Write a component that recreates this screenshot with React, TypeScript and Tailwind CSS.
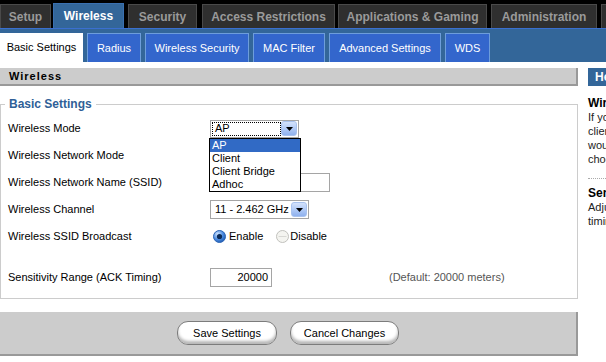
import React from "react"

const TOP_TABS = [
  { label: "Setup", w: "w-[51px]", ml: "ml-0" },
  { label: "Wireless", w: "w-[71px]", ml: "ml-[2px]", active: true },
  { label: "Security", w: "w-[69px]", ml: "ml-[4px]" },
  { label: "Access Restrictions", w: "w-[133px]", ml: "ml-[5px]" },
  { label: "Applications & Gaming", w: "w-[149px]", ml: "ml-[3px]" },
  { label: "Administration", w: "w-[106px]", ml: "ml-[4px]" },
  { label: "Status", w: "w-[60px]", ml: "ml-[4px]" },
]

const SUB_TABS = [
  { label: "Basic Settings", w: "w-[83px]", ml: "ml-0", active: true },
  { label: "Radius", w: "w-[54px]", ml: "ml-[4px]" },
  { label: "Wireless Security", w: "w-[104px]", ml: "ml-[4px]" },
  { label: "MAC Filter", w: "w-[72px]", ml: "ml-[4px]" },
  { label: "Advanced Settings", w: "w-[112px]", ml: "ml-[4px]" },
  { label: "WDS", w: "w-[45px]", ml: "ml-[4px]" },
]

const MODES = ["AP", "Client", "Client Bridge", "Adhoc"]

function DropButton() {
  return (
    <span className="flex h-[15px] w-[16px] items-center justify-center rounded-[3px] border border-[#a8c2ee] bg-gradient-to-b from-[#d4e2fb] via-[#b2cbf6] to-[#8fb1ee]">
      <svg width="7" height="4" viewBox="0 0 7 4">
        <path d="M0 0h7L3.5 4z" fill="#000" />
      </svg>
    </span>
  )
}

function Radio(props: { checked?: boolean }) {
  if (props.checked) {
    return (
      <svg width="13" height="13" viewBox="0 0 13 13">
        <defs>
          <radialGradient id="rg" cx="0.35" cy="0.3" r="0.8">
            <stop offset="0" stopColor="#cfe4ff" />
            <stop offset="0.55" stopColor="#4a8ae0" />
            <stop offset="1" stopColor="#1a55aa" />
          </radialGradient>
        </defs>
        <circle cx="6.5" cy="6.5" r="6" fill="url(#rg)" stroke="#2c64b4" />
        <circle cx="6.5" cy="6.5" r="2.6" fill="#0b2a55" />
      </svg>
    )
  }
  return (
    <svg width="13" height="13" viewBox="0 0 13 13">
      <circle cx="6.5" cy="6.5" r="6" fill="#f4f4f0" stroke="#c0c0bc" />
      <path d="M2.5 6.5h8" stroke="#d8d8d4" />
    </svg>
  )
}

function Row(props: { label: string; children?: React.ReactNode; className?: string }) {
  return (
    <div className={"flex h-[27px] items-center " + (props.className || "")}>
      <span className="w-[209px] shrink-0 pl-[7px]">{props.label}</span>
      <div className="relative flex flex-1 items-center">{props.children}</div>
    </div>
  )
}

export default function App() {
  return (
    <div className="h-[362px] w-[606px] overflow-hidden bg-white text-[11px] text-black [font-family:'Liberation_Sans',Arial,sans-serif]">
      {/* top tabs */}
      <div className="flex h-[28px] items-end bg-black">
        {TOP_TABS.map(function (t) {
          const cls = t.active
            ? "h-[25px] border-t border-x border-[#3a70b0] bg-[#336699] text-white"
            : "h-[24px] border-t border-x border-[#4a4a4a] bg-[#2f2f2f] text-[#9a9a9a]"
          return (
            <div
              key={t.label}
              className={"flex shrink-0 items-center justify-center text-[12px] font-bold " + t.w + " " + t.ml + " " + cls}
            >
              {t.label}
            </div>
          )
        })}
      </div>

      {/* sub tabs */}
      <div className="flex h-[34px] items-end border-t border-[#3a6fd0] bg-[#336699]">
        {SUB_TABS.map(function (t) {
          const cls = t.active
            ? "bg-white text-black"
            : "border-t border-x border-[#6d9ddb] bg-[#3366cc] text-white"
          return (
            <div
              key={t.label}
              className={"flex h-[29px] shrink-0 items-center justify-center text-[11px] " + t.w + " " + t.ml + " " + cls}
            >
              {t.label}
            </div>
          )
        })}
      </div>

      <div className="flex gap-[10px] pt-[6px]">
        {/* main column */}
        <div className="w-[578px] shrink-0">
          <div className="flex h-[18px] items-center border-b-2 border-r-2 border-[#999] bg-[#cccccc] pl-[9px] text-[11px] font-bold tracking-[1px]">
            Wireless
          </div>

          <fieldset className="mt-[11px] border border-[#cccccc] pb-[7px] pt-[4px]">
            <legend className="ml-[4px] px-[4px] text-[12px] font-bold leading-[14px] text-[#2f5f97]">
              Basic Settings
            </legend>

            <Row label="Wireless Mode">
              <div className="relative">
                <div className="flex h-[18px] w-[89px] items-center border border-[#a5a5a5] bg-white p-[1px]">
                  <span className="flex h-full flex-1 items-center border border-dotted border-black pl-[2px]">AP</span>
                  <DropButton />
                </div>
                <div className="absolute left-[-1px] top-[18px] z-10 w-[92px] border border-black bg-white">
                  {MODES.map(function (m, i) {
                    return (
                      <div
                        key={m}
                        className={"flex h-[13px] items-center pl-[2px] " + (i === 0 ? "bg-[#316ac5] text-white" : "")}
                      >
                        {m}
                      </div>
                    )
                  })}
                </div>
              </div>
            </Row>

            <Row label="Wireless Network Mode">
              <div className="h-[18px] w-[80px] border border-[#a5a5a5] bg-white" />
            </Row>

            <Row label="Wireless Network Name (SSID)">
              <div className="h-[19px] w-[120px] border border-[#a5a5a5] bg-white" />
            </Row>

            <Row label="Wireless Channel">
              <div className="flex h-[19px] w-[99px] items-center border border-[#a5a5a5] bg-white p-[1px]">
                <span className="flex-1 pl-[3px]">11 - 2.462 GHz</span>
                <DropButton />
              </div>
            </Row>

            <Row label="Wireless SSID Broadcast">
              <div className="flex items-center pl-[3px]">
                <Radio checked />
                <span className="ml-[3px]">Enable</span>
                <span className="ml-[13px]">
                  <Radio />
                </span>
                <span className="ml-[1px]">Disable</span>
              </div>
            </Row>

            <Row label="Sensitivity Range (ACK Timing)" className="mt-[14px]">
              <div className="flex h-[19px] w-[62px] items-center justify-end border border-[#a5a5a5] bg-white pr-[3px]">
                20000
              </div>
              <span className="ml-[117px] text-[#555]">(Default: 20000 meters)</span>
            </Row>
          </fieldset>

          <div className="mt-[13px] flex h-[44px] items-center justify-center gap-[13px] border-b-2 border-r-2 border-[#999] bg-[#cccccc]">
            <button className="h-[24px] w-[100px] rounded-[11px] border border-[#7c7c7c] bg-white text-[11px] shadow-[inset_0_-3px_3px_#b8b8b8]">
              Save Settings
            </button>
            <button className="h-[24px] w-[109px] rounded-[11px] border border-[#7c7c7c] bg-white text-[11px] shadow-[inset_0_-3px_3px_#b8b8b8]">
              Cancel Changes
            </button>
          </div>
        </div>

        {/* help column */}
        <div className="w-[170px] shrink-0">
          <div className="flex h-[18px] items-center bg-[#336699] pl-[7px] text-[12px] font-bold text-white">
            Help
          </div>
          <div className="mt-[10px] text-[12px] font-bold leading-[14px]">Wireless Mode</div>
          <p className="whitespace-nowrap leading-[14px] text-[#222]">
            If you want your router to be a<br />
            client of another access point you<br />
            would choose Client mode, otherwise<br />
            choose AP.
          </p>
          <div className="mt-[12px] border-t border-dotted border-[#aaa]" />
          <div className="mt-[7px] text-[12px] font-bold leading-[14px]">Sensitivity Range</div>
          <p className="whitespace-nowrap leading-[14px] text-[#222]">
            Adjusts the ack timing. 0 disables ack<br />
            timing completely.
          </p>
        </div>
      </div>
    </div>
  )
}
